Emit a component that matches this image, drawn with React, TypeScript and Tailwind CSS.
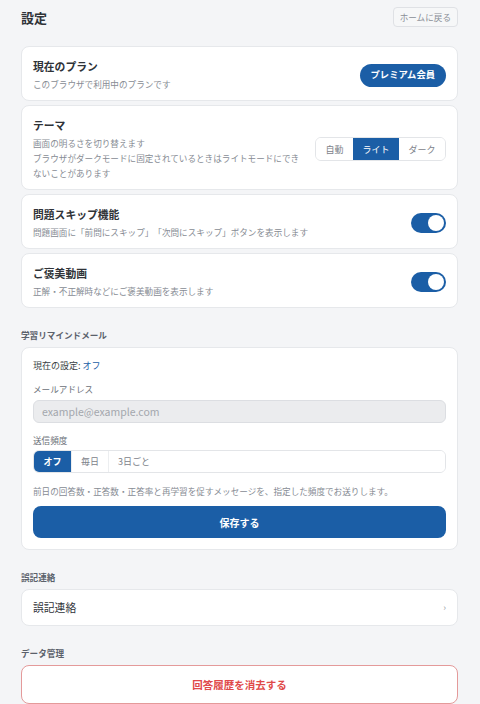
import { useState } from 'react'

type Theme = 'auto' | 'light' | 'dark'
type Freq = 'off' | 'daily' | 'every3'

function Toggle({ on, onChange }: { on: boolean; onChange: (v: boolean) => void }) {
  return (
    <button
      type="button"
      onClick={() => onChange(!on)}
      className={`relative h-[20px] w-[35px] shrink-0 rounded-full ${on ? 'bg-[#1b5ea6]' : 'bg-[#d1d5db]'}`}
    >
      <span
        className={`absolute top-[2px] h-[16px] w-[16px] rounded-full bg-white ${on ? 'left-[17px]' : 'left-[2px]'}`}
      />
    </button>
  )
}

function Card({ children, className = '' }: { children: React.ReactNode; className?: string }) {
  return (
    <div className={`rounded-lg border border-[#e6e8eb] bg-white ${className}`}>{children}</div>
  )
}

function SectionLabel({ children }: { children: React.ReactNode }) {
  return (
    <div className="mt-[20px] mb-[5px] text-[8.6px] font-bold leading-[14px] text-[#5b616b]">
      {children}
    </div>
  )
}

export default function App() {
  const [theme, setTheme] = useState<Theme>('light')
  const [skip, setSkip] = useState(true)
  const [reward, setReward] = useState(true)
  const [freq, setFreq] = useState<Freq>('off')

  const themes: { key: Theme; label: string }[] = [
    { key: 'auto', label: '自動' },
    { key: 'light', label: 'ライト' },
    { key: 'dark', label: 'ダーク' },
  ]

  const freqs: { key: Freq; label: string }[] = [
    { key: 'off', label: 'オフ' },
    { key: 'daily', label: '毎日' },
    { key: 'every3', label: '3日ごと' },
  ]

  return (
    <div
      className="min-h-screen bg-[#f4f5f7] pl-[21px] pr-[22px] pt-[7px] pb-6 text-[#2f3338] [text-spacing-trim:space-all]"
      style={{ fontFamily: '"Noto Sans CJK JP", "Noto Sans", sans-serif' }}
    >
      {/* Header */}
      <div className="mb-[19px] flex h-[20px] items-center justify-between">
        <h1 className="text-[13px] font-bold leading-none text-[#2f3338]">設定</h1>
        <button
          type="button"
          className="h-[20px] rounded border border-[#dfe1e5] bg-[#f6f7f8] px-[6px] text-[8.6px] leading-none text-[#8a8f97]"
        >
          ホームに戻る
        </button>
      </div>

      <div className="flex flex-col gap-1">
        {/* Plan */}
        <Card className="flex items-center justify-between px-[11px] pt-[11px] pb-[8px]">
          <div>
            <div className="text-[10.8px] font-bold leading-[16px]">現在のプラン</div>
            <div className="mt-[3px] text-[8.6px] leading-[15px] text-[#878c94]">
              このブラウザで利用中のプランです
            </div>
          </div>
          <span className="flex h-[23px] items-center rounded-full bg-[#1b5ea6] px-[11px] text-[9.3px] font-bold text-white">
            プレミアム会員
          </span>
        </Card>

        {/* Theme */}
        <Card className="flex items-center justify-between gap-3 px-[11px] pt-[11px] pb-[8px]">
          <div className="w-[270px]">
            <div className="text-[10.8px] font-bold leading-[16px]">テーマ</div>
            <div className="mt-[3px] text-[8.6px] leading-[15px] text-[#878c94]">
              <p>画面の明るさを切り替えます</p>
              <p>ブラウザがダークモードに固定されているときはライトモードにできないことがあります</p>
            </div>
          </div>
          <div className="flex h-[24px] shrink-0 overflow-hidden rounded-md border border-[#e3e5e8]">
            {themes.map((t) => (
              <button
                key={t.key}
                type="button"
                onClick={() => setTheme(t.key)}
                className={`px-[9.5px] text-[9px] leading-none ${
                  theme === t.key ? 'bg-[#1b5ea6] text-white' : 'bg-white text-[#7d828a]'
                }`}
              >
                {t.label}
              </button>
            ))}
          </div>
        </Card>

        {/* Skip */}
        <Card className="flex items-center justify-between px-[11px] pt-[11px] pb-[8px]">
          <div>
            <div className="text-[10.8px] font-bold leading-[16px]">問題スキップ機能</div>
            <div className="mt-[3px] text-[8.6px] leading-[15px] text-[#878c94]">
              問題画面に「前問にスキップ」「次問にスキップ」ボタンを表示します
            </div>
          </div>
          <Toggle on={skip} onChange={setSkip} />
        </Card>

        {/* Reward video */}
        <Card className="flex items-center justify-between px-[11px] pt-[11px] pb-[8px]">
          <div>
            <div className="text-[10.8px] font-bold leading-[16px]">ご褒美動画</div>
            <div className="mt-[3px] text-[8.6px] leading-[15px] text-[#878c94]">
              正解・不正解時などにご褒美動画を表示します
            </div>
          </div>
          <Toggle on={reward} onChange={setReward} />
        </Card>
      </div>

      {/* Reminder mail */}
      <SectionLabel>学習リマインドメール</SectionLabel>
      <Card className="px-[11px] pt-[11px] pb-[11px]">
        <div className="text-[9px] leading-[14px] text-[#3a3f45]">
          現在の設定: <span className="text-[#1b5ea6]">オフ</span>
        </div>
        <div className="mt-[9px] text-[8.6px] leading-[14px] text-[#6b7078]">メールアドレス</div>
        <input
          disabled
          placeholder="example@example.com"
          className="mt-[4px] h-[23px] w-full rounded-md border border-[#dcdee2] bg-[#ebecee] px-[8px] text-[10.5px] placeholder:text-[#a3a7ad]"
        />
        <div className="mt-[10px] text-[8.6px] leading-[14px] text-[#6b7078]">送信頻度</div>
        <div className="mt-[3px] flex h-[23px] overflow-hidden rounded-md border border-[#e3e5e8]">
          {freqs.map((f, i) => (
            <button
              key={f.key}
              type="button"
              onClick={() => setFreq(f.key)}
              className={`text-[9px] leading-none ${i > 0 ? 'border-l border-[#eceef0]' : ''} ${
                i === 2 ? 'flex-1 px-[9px] text-left' : 'w-[37px] text-center'
              } ${freq === f.key ? 'bg-[#1b5ea6] font-bold text-white' : 'bg-white text-[#7d828a]'}`}
            >
              {f.label}
            </button>
          ))}
        </div>
        <div className="mt-[11px] text-[8.6px] leading-[14px] text-[#878c94]">
          前日の回答数・正答数・正答率と再学習を促すメッセージを、指定した頻度でお送りします。
        </div>
        <button
          type="button"
          className="mt-[8px] h-[32px] w-full rounded-lg bg-[#1b5ea6] text-[10px] font-bold text-white"
        >
          保存する
        </button>
      </Card>

      {/* Correction */}
      <SectionLabel>誤記連絡</SectionLabel>
      <Card className="flex h-[37px] items-center justify-between px-[11px]">
        <span className="text-[10.8px] text-[#2f3338]">誤記連絡</span>
        <span className="text-[9px] text-[#9aa0a6]">›</span>
      </Card>

      {/* Data */}
      <SectionLabel>データ管理</SectionLabel>
      <button
        type="button"
        className="h-[39px] w-full rounded-lg border border-[#e49a9a] bg-white text-[10.5px] font-bold text-[#df4a4a]"
      >
        回答履歴を消去する
      </button>
    </div>
  )
}
